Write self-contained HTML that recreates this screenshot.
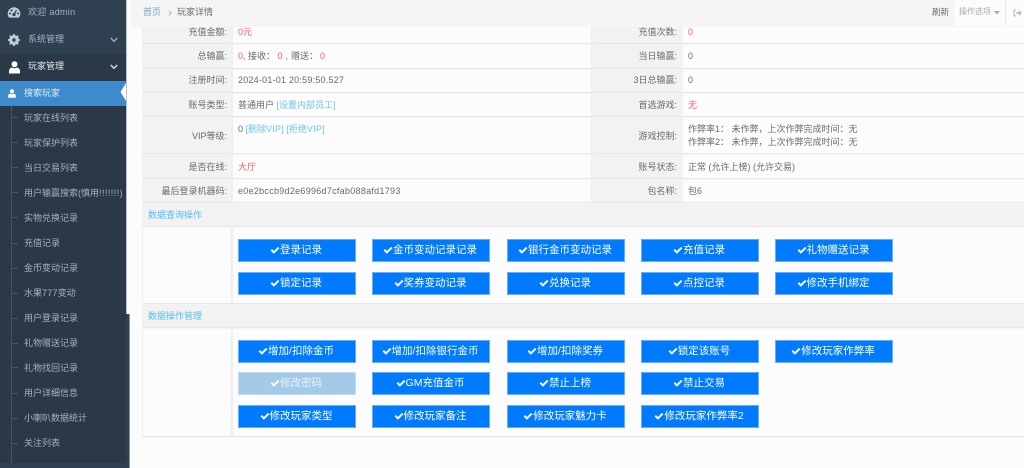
<!DOCTYPE html>
<html lang="zh"><head><meta charset="utf-8"><title>玩家详情</title>
<style>
html,body{margin:0;padding:0;width:1024px;height:468px;overflow:hidden;background:#fcfcfc}
body{font-family:"Liberation Sans","Noto Sans CJK SC",sans-serif;font-size:9px;color:#676a6c;position:relative}
div,a{box-sizing:border-box}
.abs,.m,.s,.l,.v,.hl,.vl,.b,.sec{position:absolute;white-space:nowrap}
.m{left:0;width:126px;height:27px;line-height:27px;font-size:9px;color:#a7b1c2}
.mt{position:absolute;left:28px;top:-1px}
.s{left:24px;color:#a7b1c2;font-size:9px;line-height:14px}
.tick{position:absolute;left:12px;width:6px;height:1px;background:#46566a}
.l{text-align:right;color:#676a6c;line-height:14px}
.v{color:#676a6c;line-height:14px}
.r{color:#ff5a5f}.u{color:#6cc3f5}
.hl{height:1px;background:#e8e8e8;box-shadow:0 1px 0 #f4f4f4}
.vl{width:1.500px;background:#efefef}
.bgl{position:absolute;background:#f3f2f2}
.sec{left:148px;color:#4dc1f7;font-size:9px;line-height:14px}
.b{width:118px;height:23px;background:#007bff;border:1px solid #69aef5;color:#fff;text-align:center;font-size:10.500px;line-height:21px;padding-right:2px}
.b.d{background:#a3cbe9;border-color:#c0dcf0;color:#e9f1f8}
.b svg{width:10px;height:8.500px;vertical-align:-1px}
.la{letter-spacing:.25px}
</style></head><body>

<!-- sidebar -->
<div class="abs" style="left:0;top:0;width:126px;height:315px;background:#2a3848"></div>
<div class="abs" style="left:0;top:315px;width:126px;height:153px;background:#2a3848"></div>
<div class="abs" style="left:126px;top:314px;width:3px;height:154px;background:#2f4050"></div>
<div class="abs" style="left:0;top:0;width:126px;height:54px;background:#2f4050"></div>
<div class="abs" style="left:126px;top:0;width:1px;height:314px;background:#b9c0c7"></div>
<div class="abs" style="left:129px;top:314px;width:1px;height:154px;background:#8794a2"></div>
<div class="abs" style="left:0;top:463px;width:126px;height:5px;background:#2f4050"></div>

<div class="m" style="top:0"><span class="mt" style="letter-spacing:.3px">欢迎 admin</span></div>
<svg class="abs" style="left:7px;top:6px" width="14" height="13" viewBox="0 0 14 13"><path d="M7 1.200A6.500 6.500 0 0 0 .7 7.600c0 1.500.5 2.900 1.300 4h10c.8-1.100 1.300-2.500 1.300-4A6.500 6.500 0 0 0 7 1.200z" fill="#c3cad4"/><circle cx="7" cy="8.500" r="1.600" fill="#2f4050"/><path d="M7 8.500 9.500 4" stroke="#2f4050" stroke-width="1.200"/><circle cx="3" cy="7.500" r="1" fill="#2f4050"/><circle cx="4.500" cy="4.500" r="1" fill="#2f4050"/><circle cx="11" cy="7.500" r="1" fill="#2f4050"/></svg>

<div class="m" style="top:27px"><span class="mt">系统管理</span></div>
<svg class="abs" style="left:8px;top:34px" width="12" height="12" viewBox="0 0 12 12"><circle cx="6" cy="6" r="3.600" fill="none" stroke="#c3cad4" stroke-width="2.600"/><path d="M6 0v12M0 6h12M1.800 1.800l8.400 8.400M10.200 1.800l-8.400 8.400" stroke="#c3cad4" stroke-width="1.800"/><circle cx="6" cy="6" r="1.700" fill="#2f4050"/></svg>
<svg class="abs" style="left:110px;top:37px" width="8" height="6" viewBox="0 0 8 6"><path d="M.8 1 4 4.300 7.200 1" fill="none" stroke="#a7b1c2" stroke-width="1.300"/></svg>

<div class="m" style="top:54px"><span class="mt" style="color:#e6eaef">玩家管理</span></div>
<svg class="abs" style="left:9px;top:61px" width="11" height="13" viewBox="0 0 11 13"><circle cx="5.500" cy="3.300" r="3" fill="#fff"/><path d="M0 12.500V10c0-2 1.500-3.300 3-3.500l2.500 1 2.500-1c1.500.2 3 1.500 3 3.500v2.500z" fill="#fff"/></svg>
<svg class="abs" style="left:110px;top:64px" width="8" height="6" viewBox="0 0 8 6"><path d="M.8 1 4 4.300 7.200 1" fill="none" stroke="#dfe4ea" stroke-width="1.300"/></svg>

<div class="abs" style="left:11px;top:82px;width:1px;height:381px;background:#46566a"></div>
<div class="abs" style="left:0;top:81px;width:126px;height:25px;background:#3d8bcb"></div>
<svg class="abs" style="left:120px;top:83px" width="7" height="18" viewBox="0 0 7 18"><path d="M6 0v18L.5 9z" fill="#fff"/></svg>
<svg class="abs" style="left:8px;top:89px" width="8" height="9" viewBox="0 0 8 9"><circle cx="4" cy="2.200" r="2" fill="#fff"/><path d="M.2 8.800V7c0-1.400 1-2.300 2.100-2.500L4 5.200l1.700-.7C6.800 4.700 7.800 5.600 7.800 7v1.800z" fill="#fff"/></svg>
<div class="s" style="top:86px;color:#e3eef8">搜索玩家</div>

<div class="tick" style="top:117px"></div><div class="s" style="top:111px">玩家在线列表</div>
<div class="tick" style="top:142px"></div><div class="s" style="top:136px">玩家保护列表</div>
<div class="tick" style="top:167px"></div><div class="s" style="top:161px">当日交易列表</div>
<div class="tick" style="top:192px"></div><div class="s" style="top:186px">用户输赢搜索(慎用<span style="letter-spacing:.45px">!!!!!!!)</span></div>
<div class="tick" style="top:217px"></div><div class="s" style="top:211px">实物兑换记录</div>
<div class="tick" style="top:243px"></div><div class="s" style="top:236px">充值记录</div>
<div class="tick" style="top:268px"></div><div class="s" style="top:261px">金币变动记录</div>
<div class="tick" style="top:293px"></div><div class="s" style="top:286px">水果<span class="la">777</span>变动</div>
<div class="tick" style="top:318px"></div><div class="s" style="top:311px">用户登录记录</div>
<div class="tick" style="top:343px"></div><div class="s" style="top:336px">礼物赠送记录</div>
<div class="tick" style="top:367px"></div><div class="s" style="top:361px">礼物找回记录</div>
<div class="tick" style="top:393px"></div><div class="s" style="top:386px">用户详细信息</div>
<div class="tick" style="top:418px"></div><div class="s" style="top:411px">小喇叭数据统计</div>
<div class="tick" style="top:443px"></div><div class="s" style="top:436px">关注列表</div>

<!-- top bar -->
<div class="abs" style="left:130px;top:0;width:894px;height:27px;background:#f5f5f5"></div>
<div class="abs" style="left:143px;top:5px;line-height:14px;color:#6fa4d0">首页</div>
<svg class="abs" style="left:168px;top:10px" width="4" height="6" viewBox="0 0 4 6"><path d="M.7.7 3.200 3 .7 5.300" fill="none" stroke="#aaa" stroke-width=".8"/></svg>
<div class="abs" style="left:177px;top:5px;line-height:14px;color:#676a6c">玩家详情</div>
<div class="abs" style="left:932px;top:5px;line-height:14px;color:#676a6c;font-size:8.500px">刷新</div>
<div class="abs" style="left:954px;top:0;width:51px;height:26px;background:#fcfcfc"></div>
<div class="abs" style="left:1005px;top:0;width:1px;height:26px;background:#e7e7e7"></div>
<div class="abs" style="left:959px;top:5px;line-height:14px;color:#a8aaab;font-size:8px">操作选项</div>
<svg class="abs" style="left:994px;top:11px" width="6" height="4" viewBox="0 0 6 4"><path d="M0 0h6L3 3.500z" fill="#a8aaab"/></svg>
<div class="abs" style="left:1006px;top:0;width:18px;height:26px;background:#fcfcfc"></div>
<svg class="abs" style="left:1013px;top:9px" width="9" height="8" viewBox="0 0 9 8"><path d="M3 1H1v6h2" fill="none" stroke="#b8babb" stroke-width="1"/><path d="M3.500 3h2.500V1l3 3-3 3V5H3.500z" fill="#b8babb"/></svg>

<!-- table -->
<div class="abs" style="left:130px;top:27px;width:894px;height:441px;background:#fcfcfc"></div>
<div class="bgl" style="left:143px;top:27px;width:88px;height:175px"></div>
<div class="bgl" style="left:592px;top:27px;width:91px;height:175px"></div>
<div class="abs" style="left:142px;top:202px;width:882px;height:25px;background:#f3f1f2"></div>
<div class="abs" style="left:142px;top:303px;width:882px;height:25px;background:#f3f1f2"></div>

<div class="hl" style="left:142px;right:0;top:43px"></div>
<div class="hl" style="left:142px;right:0;top:68px"></div>
<div class="hl" style="left:142px;right:0;top:92px"></div>
<div class="hl" style="left:142px;right:0;top:116px"></div>
<div class="hl" style="left:142px;right:0;top:153px"></div>
<div class="hl" style="left:142px;right:0;top:178px"></div>
<div class="hl" style="left:142px;right:0;top:202px"></div>
<div class="hl" style="left:142px;right:0;top:226px"></div>
<div class="hl" style="left:142px;right:0;top:303px"></div>
<div class="hl" style="left:142px;right:0;top:327px"></div>
<div class="hl" style="left:142px;right:0;top:436px"></div>
<div class="vl" style="left:142px;top:27px;height:410px;width:1px"></div>
<div class="vl" style="left:231px;top:27px;height:175px"></div>
<div class="vl" style="left:591px;top:27px;height:175px"></div>
<div class="vl" style="left:231px;top:228px;height:75px"></div>
<div class="vl" style="left:231px;top:329px;height:107px"></div>

<div class="l" style="left:142px;width:85px;top:25px">充值金额:</div>
<div class="v r" style="left:238px;top:25px">0元</div>
<div class="l" style="left:592px;width:85px;top:25px">充值次数:</div>
<div class="v r" style="left:688px;top:25px">0</div>

<div class="l" style="left:142px;width:85px;top:49px">总输赢:</div>
<div class="v r" style="left:238px;top:49px">0<span style="color:#676a6c">,</span></div>
<div class="v" style="left:248px;top:49px">接收：</div>
<div class="v r" style="left:277.500px;top:49px">0</div>
<div class="v" style="left:285.500px;top:49px">,</div>
<div class="v" style="left:291px;top:49px">赠送：</div>
<div class="v r" style="left:320px;top:49px">0</div>
<div class="l" style="left:592px;width:85px;top:49px">当日输赢:</div>
<div class="v" style="left:688px;top:49px">0</div>

<div class="l" style="left:142px;width:85px;top:73px">注册时间:</div>
<div class="v" style="left:238px;top:73px;letter-spacing:.22px">2024-01-01 20:59:50.527</div>
<div class="l" style="left:592px;width:85px;top:73px">3日总输赢:</div>
<div class="v" style="left:688px;top:73px">0</div>

<div class="l" style="left:142px;width:85px;top:98px">账号类型:</div>
<div class="v" style="left:238px;top:98px">普通用户 <span class="u">[设置内部员工]</span></div>
<div class="l" style="left:592px;width:85px;top:98px">首选游戏:</div>
<div class="v r" style="left:688px;top:98px">无</div>

<div class="l" style="left:142px;width:85px;top:129px">VIP等级:</div>
<div class="v" style="left:238px;top:122px">0 <span class="u">[删除<span class="la">VIP</span>]</span> <span class="u">[拒绝<span class="la">VIP</span>]</span></div>
<div class="l" style="left:592px;width:85px;top:129px">游戏控制:</div>
<div class="v" style="left:688px;top:122px">作弊率1： 未作弊，上次作弊完成时间：无</div>
<div class="v" style="left:688px;top:135px">作弊率2： 未作弊，上次作弊完成时间：无</div>

<div class="l" style="left:142px;width:85px;top:160px">是否在线:</div>
<div class="v r" style="left:238px;top:160px">大厅</div>
<div class="l" style="left:592px;width:85px;top:160px">账号状态:</div>
<div class="v" style="left:688px;top:160px">正常 (允许上榜) (允许交易)</div>

<div class="l" style="left:142px;width:85px;top:184px">最后登录机器码:</div>
<div class="v" style="left:238px;top:184px;letter-spacing:.28px">e0e2bccb9d2e6996d7cfab088afd1793</div>
<div class="l" style="left:592px;width:85px;top:184px">包名称:</div>
<div class="v" style="left:688px;top:184px">包6</div>

<div class="sec" style="top:208px">数据查询操作</div>
<div class="sec" style="top:309px">数据操作管理</div>

<svg width="0" height="0" style="position:absolute"><defs><symbol id="c" viewBox="0 0 10 8"><path d="M.6 4.200 2 2.800l1.900 1.900L8 .6l1.400 1.400-5.500 5.500z" fill="#fff"/></symbol></defs></svg>

<div class="b" style="left:238px;top:239px"><svg><use href="#c"/></svg>登录记录</div>
<div class="b" style="left:372px;top:239px"><svg><use href="#c"/></svg>金币变动记录记录</div>
<div class="b" style="left:507px;top:239px"><svg><use href="#c"/></svg>银行金币变动记录</div>
<div class="b" style="left:641px;top:239px"><svg><use href="#c"/></svg>充值记录</div>
<div class="b" style="left:775px;top:239px"><svg><use href="#c"/></svg>礼物赠送记录</div>

<div class="b" style="left:238px;top:272px"><svg><use href="#c"/></svg>锁定记录</div>
<div class="b" style="left:372px;top:272px"><svg><use href="#c"/></svg>奖券变动记录</div>
<div class="b" style="left:507px;top:272px"><svg><use href="#c"/></svg>兑换记录</div>
<div class="b" style="left:641px;top:272px"><svg><use href="#c"/></svg>点控记录</div>
<div class="b" style="left:775px;top:272px"><svg><use href="#c"/></svg>修改手机绑定</div>

<div class="b" style="left:238px;top:340px"><svg><use href="#c"/></svg>增加/扣除金币</div>
<div class="b" style="left:372px;top:340px"><svg><use href="#c"/></svg>增加/扣除银行金币</div>
<div class="b" style="left:507px;top:340px"><svg><use href="#c"/></svg>增加/扣除奖券</div>
<div class="b" style="left:641px;top:340px"><svg><use href="#c"/></svg>锁定该账号</div>
<div class="b" style="left:775px;top:340px"><svg><use href="#c"/></svg>修改玩家作弊率</div>

<div class="b d" style="left:238px;top:372px"><svg><use href="#c"/></svg>修改密码</div>
<div class="b" style="left:372px;top:372px"><svg><use href="#c"/></svg>GM充值金币</div>
<div class="b" style="left:507px;top:372px"><svg><use href="#c"/></svg>禁止上榜</div>
<div class="b" style="left:641px;top:372px"><svg><use href="#c"/></svg>禁止交易</div>

<div class="b" style="left:238px;top:405px"><svg><use href="#c"/></svg>修改玩家类型</div>
<div class="b" style="left:372px;top:405px"><svg><use href="#c"/></svg>修改玩家备注</div>
<div class="b" style="left:507px;top:405px"><svg><use href="#c"/></svg>修改玩家魅力卡</div>
<div class="b" style="left:641px;top:405px"><svg><use href="#c"/></svg>修改玩家作弊率2</div>

</body></html>
